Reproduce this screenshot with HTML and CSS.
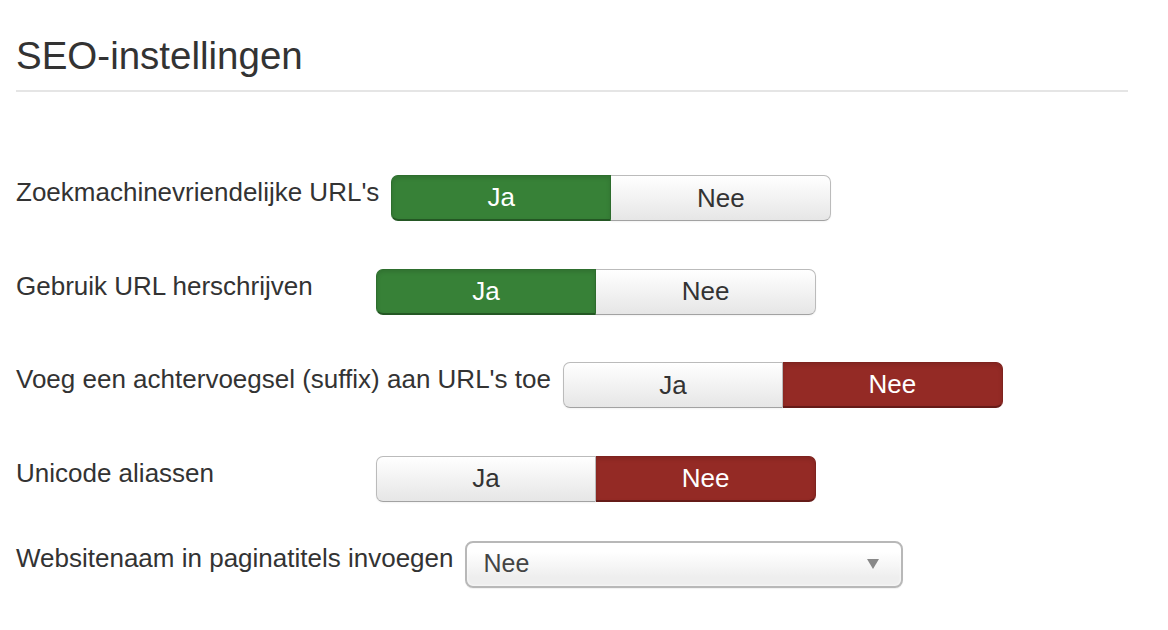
FILE: index.html
```html
<!DOCTYPE html>
<html lang="nl">
<head>
<meta charset="utf-8">
<title>SEO-instellingen</title>
<link rel="stylesheet" href="styles.css">
</head>
<body>
<div class="page">
  <div class="form">
    <h2 class="legend">SEO-instellingen</h2>

    <div class="control-group">
      <label class="control-label">Zoekmachinevriendelijke URL's</label>
      <div class="btn-group">
        <span class="btn btn-success active">Ja</span>
        <span class="btn">Nee</span>
      </div>
    </div>

    <div class="control-group">
      <label class="control-label">Gebruik URL herschrijven</label>
      <div class="btn-group">
        <span class="btn btn-success active">Ja</span>
        <span class="btn">Nee</span>
      </div>
    </div>

    <div class="control-group">
      <label class="control-label">Voeg een achtervoegsel (suffix) aan URL's toe</label>
      <div class="btn-group">
        <span class="btn">Ja</span>
        <span class="btn btn-danger active">Nee</span>
      </div>
    </div>

    <div class="control-group">
      <label class="control-label">Unicode aliassen</label>
      <div class="btn-group">
        <span class="btn">Ja</span>
        <span class="btn btn-danger active">Nee</span>
      </div>
    </div>

    <div class="control-group control-group-select">
      <label class="control-label">Websitenaam in paginatitels invoegen</label>
      <div class="select">
        <span class="select-value">Nee</span>
        <span class="select-arrow"></span>
      </div>
    </div>
  </div>
</div>
</body>
</html>
```

FILE: styles.css
```css
html, body {
  margin: 0;
  padding: 0;
  background: #fff;
}

body {
  font-family: "Liberation Sans", Arial, Helvetica, sans-serif;
  color: #333;
}

.page {
  padding: 0 40px 0 16px;
}

.form {
  margin: 0;
  padding: 0;
}

.legend {
  display: block;
  margin: 34px 0 83px;
  padding: 0 0 12px;
  font-size: 38.5px;
  line-height: 44px;
  font-weight: normal;
  color: #333;
  border-bottom: 2px solid #e5e5e5;
}

.control-group {
  display: flex;
  align-items: flex-start;
  margin-bottom: 47.67px;
}

.control-group-select {
  margin-top: -8.67px;
}

.control-label {
  min-width: 348px;
  margin-right: 12px;
  margin-top: -1px;
  font-size: 26px;
  line-height: 36px;
  color: #333;
  white-space: nowrap;
}

.btn-group {
  display: flex;
}

.btn {
  box-sizing: border-box;
  width: 220px;
  height: 46px;
  display: flex;
  align-items: center;
  justify-content: center;
  font-size: 26px;
  color: #333;
  background: linear-gradient(#ffffff, #e6e6e6);
  border: 1px solid #bbb;
  border-bottom-color: #a2a2a2;
  box-shadow: inset 0 1px 0 rgba(255,255,255,.2), 0 1px 2px rgba(0,0,0,.05);
}

.btn:first-child {
  border-radius: 7px 0 0 7px;
}

.btn:last-child {
  border-radius: 0 7px 7px 0;
  border-left: 0;
}

.btn-success.active {
  color: #fff;
  background: #378137;
  border-color: #2e6e2e;
  border-bottom: 2px solid #245724;
  box-shadow: inset 0 2px 4px rgba(0,0,0,.12);
}

.btn-danger.active {
  color: #fff;
  background: #942a25;
  border-color: #7e231f;
  border-bottom: 2px solid #651b18;
  box-shadow: inset 0 2px 4px rgba(0,0,0,.12);
}

.select {
  box-sizing: border-box;
  width: 438px;
  height: 47px;
  display: flex;
  align-items: center;
  justify-content: space-between;
  padding: 0 22px 0 16px;
  border: 2px solid #b8b8b8;
  border-radius: 8px;
  background: linear-gradient(#ffffff 20%, #eeeeee 80%);
  box-shadow: inset 0 0 3px rgba(255,255,255,1), 0 1px 1px rgba(0,0,0,.06);
}

.select-value {
  font-size: 25px;
  color: #444;
  line-height: 30px;
  margin-top: -3px;
}

.select-arrow {
  width: 0;
  height: 0;
  border-left: 6px solid transparent;
  border-right: 6px solid transparent;
  border-top: 10px solid #888;
}
```
